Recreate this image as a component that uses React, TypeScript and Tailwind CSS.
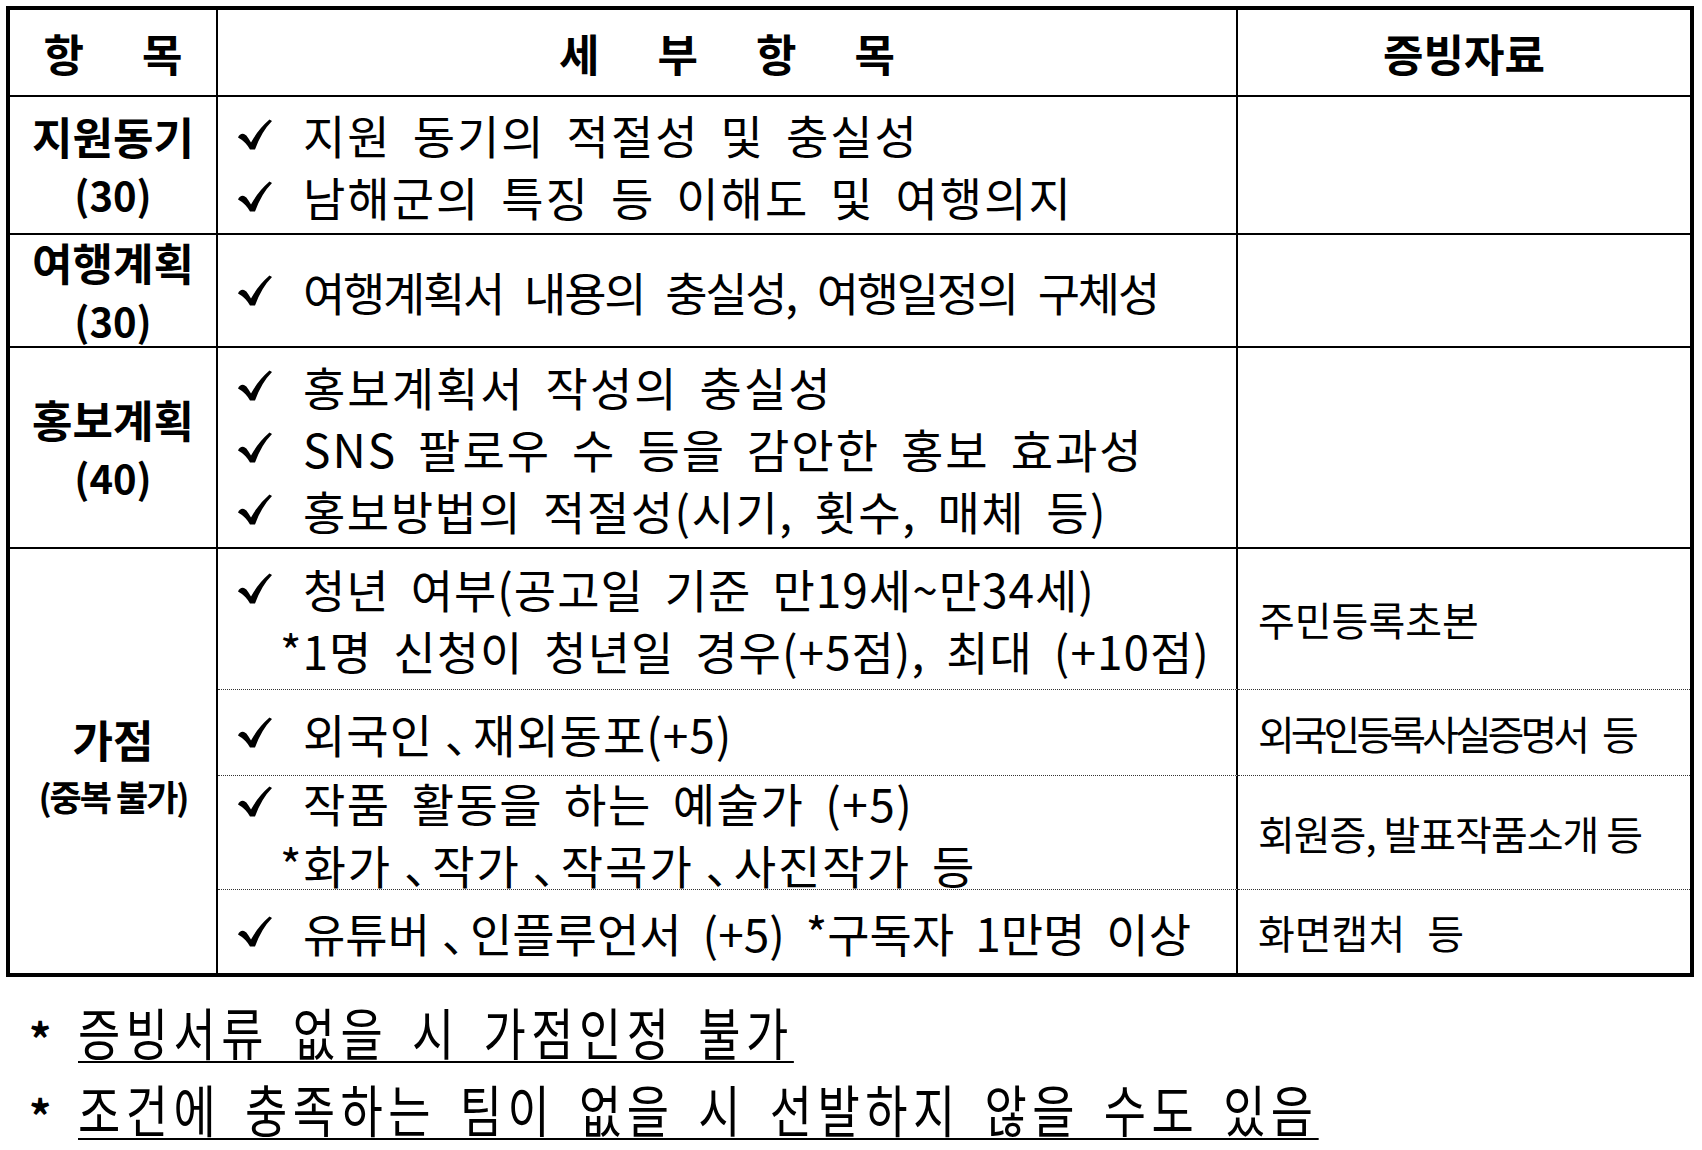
import React from "react";

const KR = "font-['Noto_Sans_CJK_KR','Noto_Sans',sans-serif]";

function CheckMark() {
  return (
    <svg viewBox="0 0 34 31" className="h-[31px] w-[34px]" aria-hidden>
      <path
        d="M0 18.5 Q2 14 6 15 Q8.5 15.8 10.5 19.5 L13 23.5 Q20 10.5 31.5 0.5 L34 2 Q23.5 12.5 17 30.5 L12 30.5 Q7.5 22.5 0 18.5 Z"
        fill="black"
      />
    </svg>
  );
}

// the source uses a small comma mark sitting in the middle of its own cell
function Word({ w }: { w: string }) {
  const parts = w.split("、");
  return (
    <span className="whitespace-pre">
      {parts.map((p, i) => (
        <React.Fragment key={i}>
          {i > 0 && <span className="inline-block w-[40px] pl-[13px]">､</span>}
          {p}
        </React.Fragment>
      ))}
    </span>
  );
}

type L = { text: string; indent?: boolean; tight?: string };

function Line({ text, indent, tight }: L) {
  return (
    <div className={`flex items-center ${tight ?? "tracking-[2px]"}`}>
      {indent ? (
        <span className="w-[62px] shrink-0" />
      ) : (
        <span className="flex w-[85px] shrink-0 items-center pl-[20px]">
          <CheckMark />
        </span>
      )}
      <span className="flex gap-[21px]">
        {text.split(" ").map((w, i) => (
          <Word key={i} w={w} />
        ))}
      </span>
    </div>
  );
}

function Body({ lines, dotted }: { lines: L[]; dotted?: boolean }) {
  return (
    <div
      className={`flex flex-col justify-center border-r-2 border-black text-[46px] leading-[62px] ${
        dotted ? "border-b [border-bottom-style:dotted] border-b-[#333]" : ""
      }`}
    >
      {lines.map((l, i) => (
        <Line key={i} {...l} />
      ))}
    </div>
  );
}

function Proof({ children, dotted, cls }: { children?: React.ReactNode; dotted?: boolean; cls?: string }) {
  return (
    <div
      className={`flex items-center whitespace-pre pl-[20px] text-[40px] ${
        dotted ? "border-b [border-bottom-style:dotted] border-b-[#333]" : ""
      } ${cls ?? ""}`}
    >
      {children}
    </div>
  );
}

function Label({ title, sub }: { title: string; sub: string }) {
  return (
    <div className="flex flex-col items-center justify-center border-r-2 border-b-2 border-black font-bold">
      <span className="text-[44px] leading-[58px]">{title}</span>
      <span className="text-[40px] leading-[58px]">{sub}</span>
    </div>
  );
}

function Note({ text }: { text: string }) {
  return (
    <div className="flex h-[77px] items-center">
      <span className="w-[78px] shrink-0 translate-y-[6px] pl-[29px] text-[44px] font-bold leading-[77px]">*</span>
      <span className="flex origin-left scale-x-[0.82] gap-[29px] border-b-2 border-black text-[56px] leading-[60px] tracking-[6.7px]">
        {text.split(" ").map((w, i) => (
          <span key={i} className="whitespace-pre">
            {w}
          </span>
        ))}
      </span>
    </div>
  );
}

export default function App() {
  return (
    <div className={`h-[1150px] w-[1702px] overflow-hidden bg-white text-black ${KR}`}>
      <div className="ml-[6px] mt-[6px] w-[1688px] border-4 border-black">
        <div className="grid grid-cols-[208px_1020px_1fr] grid-rows-[87px_138px_113px_201px_141px_86px_114px_83px]">
          {/* header */}
          <div className="flex items-center justify-center gap-[58px] border-r-2 border-b-2 border-black text-[44px] font-bold">
            <span>항</span>
            <span>목</span>
          </div>
          <div className="flex items-center justify-center gap-[58px] border-r-2 border-b-2 border-black text-[44px] font-bold">
            <span>세</span>
            <span>부</span>
            <span>항</span>
            <span>목</span>
          </div>
          <div className="flex items-center justify-center border-b-2 border-black text-[44px] font-bold">
            증빙자료
          </div>

          {/* 지원동기 */}
          <Label title="지원동기" sub="(30)" />
          <div className="contents [&>div]:border-b-2">
            <Body
              lines={[
                { text: "지원 동기의 적절성 및 충실성" },
                { text: "남해군의 특징 등 이해도 및 여행의지" },
              ]}
            />
            <div className="border-black" />
          </div>

          {/* 여행계획 */}
          <Label title="여행계획" sub="(30)" />
          <div className="contents [&>div]:border-b-2">
            <Body lines={[{ text: "여행계획서 내용의 충실성, 여행일정의 구체성", tight: "tracking-[-2.3px]" }]} />
            <div className="border-black" />
          </div>

          {/* 홍보계획 */}
          <Label title="홍보계획" sub="(40)" />
          <div className="contents [&>div]:border-b-2">
            <Body
              lines={[
                { text: "홍보계획서 작성의 충실성" },
                { text: "SNS 팔로우 수 등을 감안한 홍보 효과성" },
                { text: "홍보방법의 적절성(시기, 횟수, 매체 등)", tight: "tracking-[1.5px]" },
              ]}
            />
            <div className="border-black" />
          </div>

          {/* 가점 */}
          <div className="row-span-4 flex flex-col items-center justify-center border-r-2 border-black pt-[12px] font-bold">
            <span className="text-[44px] leading-[58px]">가점</span>
            <span className="text-[35px] leading-[56px] tracking-[-2px]">(중복 불가)</span>
          </div>

          <Body
            dotted
            lines={[
              { text: "청년 여부(공고일 기준 만19세~만34세)", tight: "tracking-[1px]" },
              { text: "*1명 신청이 청년일 경우(+5점), 최대 (+10점)", indent: true, tight: "tracking-[1px]" },
            ]}
          />
          <Proof dotted>주민등록초본</Proof>

          <Body dotted lines={[{ text: "외국인、재외동포(+5)", tight: "tracking-[1px]" }]} />
          <Proof dotted>
            <span className="flex gap-[16px]">
              <span className="tracking-[-4px]">외국인등록사실증명서</span>
              <span>등</span>
            </span>
          </Proof>

          <Body
            dotted
            lines={[
              { text: "작품 활동을 하는 예술가 (+5)", tight: "tracking-[1.5px]" },
              { text: "*화가、작가、작곡가、사진작가 등", indent: true },
            ]}
          />
          <Proof dotted cls="tracking-[-1px]">회원증, 발표작품소개 등</Proof>

          <Body lines={[{ text: "유튜버、인플루언서 (+5) *구독자 1만명 이상", tight: "tracking-[0px]" }]} />
          <Proof>
            <span className="flex gap-[22px]">
              <span>화면캡처</span>
              <span>등</span>
            </span>
          </Proof>
        </div>
      </div>

      <div className="mt-[16px] flex flex-col">
        <Note text="증빙서류 없을 시 가점인정 불가" />
        <Note text="조건에 충족하는 팀이 없을 시 선발하지 않을 수도 있음" />
      </div>
    </div>
  );
}
